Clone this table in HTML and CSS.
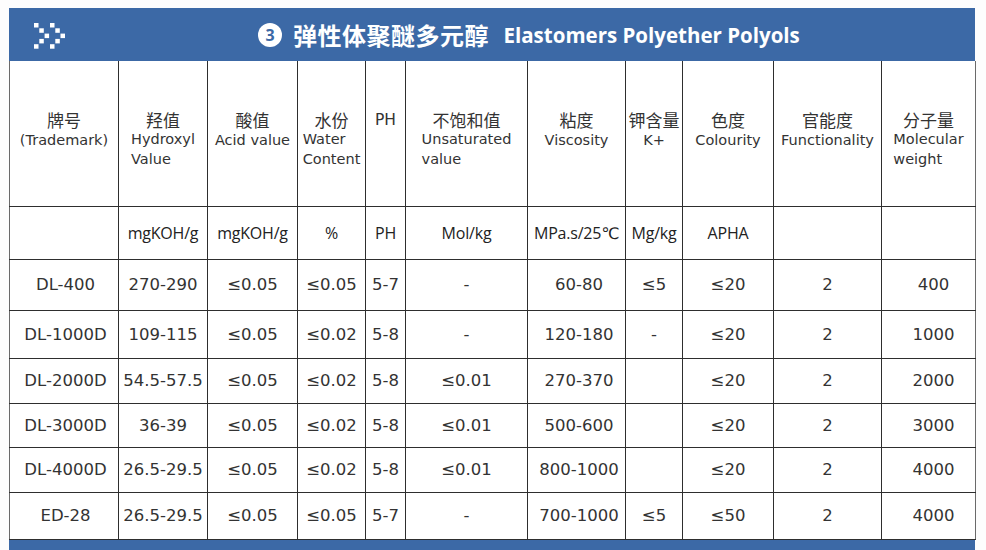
FILE: index.html
```html
<!DOCTYPE html>
<html lang="zh">
<head>
<meta charset="utf-8">
<title>弹性体聚醚多元醇 Elastomers Polyether Polyols</title>
<link rel="stylesheet" href="styles.css">
</head>
<body>
<div class="sheet">
  <header class="banner">
    <svg class="logo" width="31" height="26" viewBox="0 0 31 26" aria-hidden="true">
      <g fill="#fff">
        <rect x="0" y="0" width="4.5" height="4.5"/>
        <rect x="5.3" y="5.3" width="4.5" height="4.5"/>
        <rect x="10.6" y="10.6" width="4.5" height="4.5"/>
        <rect x="5.3" y="15.9" width="4.5" height="4.5"/>
        <rect x="0" y="21.2" width="4.5" height="4.5"/>
        <rect x="16" y="0" width="4.5" height="4.5"/>
        <rect x="21.3" y="5.3" width="4.5" height="4.5"/>
        <rect x="26.5" y="10.6" width="4.5" height="4.5"/>
        <rect x="21.3" y="15.9" width="4.5" height="4.5"/>
        <rect x="16" y="21.2" width="4.5" height="4.5"/>
      </g>
    </svg>
    <h1 class="title"><span class="num">3</span><span class="title-cn">弹性体聚醚多元醇</span><span class="title-en">Elastomers Polyether Polyols</span></h1>
  </header>

  <table class="spec">
    <colgroup>
      <col class="c-mark"><col class="c-oh"><col class="c-acid"><col class="c-water"><col class="c-ph">
      <col class="c-unsat"><col class="c-visc"><col class="c-k"><col class="c-color"><col class="c-func"><col class="c-mw">
    </colgroup>
    <thead>
      <tr class="head">
        <th><span class="cn">牌号</span><span class="en">(Trademark)</span></th>
        <th><span class="cn">羟值</span><span class="en">Hydroxyl<br>Value</span></th>
        <th><span class="cn">酸值</span><span class="en">Acid value</span></th>
        <th><span class="cn">水份</span><span class="en">Water<br>Content</span></th>
        <th><span class="cn ph">PH</span></th>
        <th><span class="cn">不饱和值</span><span class="en">Unsaturated<br>value</span></th>
        <th><span class="cn">粘度</span><span class="en">Viscosity</span></th>
        <th><span class="cn">钾含量</span><span class="en">K+</span></th>
        <th><span class="cn">色度</span><span class="en">Colourity</span></th>
        <th><span class="cn">官能度</span><span class="en">Functionality</span></th>
        <th><span class="cn">分子量</span><span class="en">Molecular<br>weight</span></th>
      </tr>
      <tr class="units">
        <td></td>
        <td>mgKOH/g</td>
        <td>mgKOH/g</td>
        <td>%</td>
        <td>PH</td>
        <td>Mol/kg</td>
        <td>MPa.s/25℃</td>
        <td>Mg/kg</td>
        <td>APHA</td>
        <td></td>
        <td></td>
      </tr>
    </thead>
    <tbody>
      <tr class="r1">
        <td>DL-400</td><td>270-290</td><td>≤0.05</td><td>≤0.05</td><td>5-7</td><td>-</td><td>60-80</td><td>≤5</td><td>≤20</td><td>2</td><td>400</td>
      </tr>
      <tr class="r2">
        <td>DL-1000D</td><td>109-115</td><td>≤0.05</td><td>≤0.02</td><td>5-8</td><td>-</td><td>120-180</td><td>-</td><td>≤20</td><td>2</td><td>1000</td>
      </tr>
      <tr class="r3">
        <td>DL-2000D</td><td>54.5-57.5</td><td>≤0.05</td><td>≤0.02</td><td>5-8</td><td>≤0.01</td><td>270-370</td><td></td><td>≤20</td><td>2</td><td>2000</td>
      </tr>
      <tr class="r4">
        <td>DL-3000D</td><td>36-39</td><td>≤0.05</td><td>≤0.02</td><td>5-8</td><td>≤0.01</td><td>500-600</td><td></td><td>≤20</td><td>2</td><td>3000</td>
      </tr>
      <tr class="r5">
        <td>DL-4000D</td><td>26.5-29.5</td><td>≤0.05</td><td>≤0.02</td><td>5-8</td><td>≤0.01</td><td>800-1000</td><td></td><td>≤20</td><td>2</td><td>4000</td>
      </tr>
      <tr class="r6">
        <td>ED-28</td><td>26.5-29.5</td><td>≤0.05</td><td>≤0.05</td><td>5-7</td><td>-</td><td>700-1000</td><td>≤5</td><td>≤50</td><td>2</td><td>4000</td>
      </tr>
    </tbody>
  </table>
  <div class="footbar"></div>
</div>
</body>
</html>
```

FILE: styles.css
```css
html, body {
  margin: 0;
  padding: 0;
  overflow: hidden;
  background: #fdfdfd;
}

body {
  font-family: "DejaVu Sans", "Noto Sans CJK SC", sans-serif;
  color: #333;
}

.sheet {
  width: 966px;
  margin: 8px 0 0 9px;
}

/* ---------- banner ---------- */
.banner {
  height: 53px;
  background: #3c69a6;
  display: flex;
  align-items: center;
  padding-left: 25px;
  box-sizing: border-box;
}

.logo {
  display: block;
  flex: none;
  margin-top: 3px;
}

.title {
  margin: 0 0 0 193px;
  display: flex;
  align-items: center;
  color: #fff;
  font-weight: 700;
  white-space: nowrap;
}

.num {
  width: 24px;
  height: 24px;
  border-radius: 50%;
  background: #fff;
  color: #3c69a6;
  font: 700 16px/24px "Open Sans", sans-serif;
  text-align: center;
  margin-right: 11px;
}

.title-cn {
  font: 700 24px/30px "Noto Sans CJK SC", sans-serif;
  letter-spacing: 0.5px;
  margin-right: 14.5px;
}

.title-en {
  font: 700 20.5px/28px "Open Sans", sans-serif;
}

/* ---------- table ---------- */
.spec {
  width: 966px;
  border-collapse: collapse;
  table-layout: fixed;
  background: #fff;
}

.c-mark  { width: 109px; }
.c-oh    { width: 89px; }
.c-acid  { width: 90px; }
.c-water { width: 68px; }
.c-ph    { width: 40px; }
.c-unsat { width: 122px; }
.c-visc  { width: 98px; }
.c-k     { width: 57px; }
.c-color { width: 91px; }
.c-func  { width: 108px; }
.c-mw    { width: 94px; }

.spec th,
.spec td {
  border: 1px solid #2e2e2e;
  padding: 0;
  text-align: center;
  white-space: nowrap;
  overflow: hidden;
}

.spec th:first-child,
.spec td:first-child {
  border-left-color: #6a6a6a;
}

.spec th:last-child,
.spec td:last-child {
  border-right-color: #6a6a6a;
}

.head th {
  border-top: none;
  height: 145px;
  box-sizing: border-box;
  vertical-align: top;
  padding-top: 49px;
  font-weight: normal;
  color: #333;
}

.head .cn {
  display: block;
  font: 400 17px/20px "Noto Sans CJK SC", sans-serif;
}

.head .cn.ph {
  font: 400 15.5px/20px "DejaVu Sans", sans-serif;
}

.head .en {
  display: inline-block;
  text-align: left;
  font-size: 14.5px;
  line-height: 19.5px;
}

.units td {
  height: 52px;
  font: 400 16px "Open Sans", "DejaVu Sans", sans-serif;
  letter-spacing: -0.2px;
  color: #222;
}

tbody td {
  font-size: 16.5px;
  color: #333;
  padding-top: 2px;
}

tbody td:first-child {
  padding-left: 3px;
}

tbody td:nth-child(7) {
  padding-left: 5px;
}

tbody td:last-child {
  padding-left: 10px;
}

.r1 td { height: 50px; }
.r2 td { height: 47px; }
.r3 td { height: 44px; }
.r4 td { height: 43px; }
.r5 td { height: 44px; }
.r6 td { height: 46px; }

.footbar {
  height: 12px;
  background: #3c69a6;
}
```
